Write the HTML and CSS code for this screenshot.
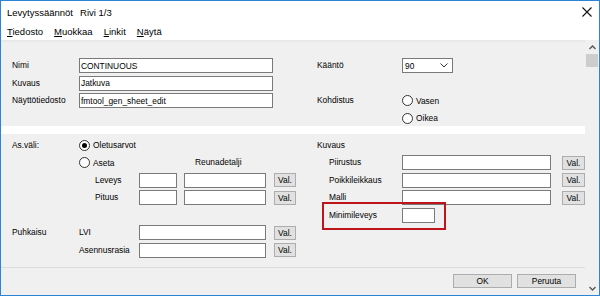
FILE: index.html
```html
<!DOCTYPE html>
<html lang="fi">
<head>
  <meta charset="UTF-8" />
  <meta name="viewport" content="width=device-width, initial-scale=1.0"/>
  <title>Levytyssäännöt</title>
  <link rel="stylesheet" href="styles.css">
</head>
<body>
  <div class="window">
    <div class="titlebar">
      <span>Levytyssäännöt</span>
      <span class="rivi">Rivi 1/3</span>
      <svg class="close" width="10" height="10" viewBox="0 0 10 10">
        <path d="M0.5 0.5L9.5 9.5M9.5 0.5L0.5 9.5" stroke="#111" stroke-width="1.1" fill="none"/>
      </svg>
    </div>
    <div class="menubar">
      <span><u>T</u>iedosto</span>
      <span><u>M</u>uokkaa</span>
      <span><u>L</u>inkit</span>
      <span><u>N</u>äytä</span>
    </div>

    <div class="client">
      <div class="panels">
        <div class="panel panel-top">
          <span class="lbl col1">Nimi</span>
          <input class="field col2" type="text" value="CONTINUOUS">
          <span class="lbl col4">Kääntö</span>
          <div class="select">
            <span>90</span>
            <svg width="8" height="5" viewBox="0 0 8 5"><path d="M0.5 0.5L4 4L7.5 0.5" stroke="#333" stroke-width="1" fill="none"/></svg>
          </div>

          <span class="lbl col1">Kuvaus</span>
          <input class="field col2" type="text" value="Jatkuva">

          <span class="lbl col1">Näyttötiedosto</span>
          <input class="field col2" type="text" value="fmtool_gen_sheet_edit">
          <span class="lbl col4">Kohdistus</span>
          <span class="opt col5"><span class="radio"></span>Vasen</span>
          <span class="opt col5"><span class="radio"></span>Oikea</span>
        </div>

        <div class="band"></div>

        <div class="panel panel-bottom">
          <div class="form">
            <span class="lbl c-main">As.väli:</span>
            <span class="opt c-opt"><span class="radio on"></span>Oletusarvot</span>
            <span class="lbl c-grp">Kuvaus</span>

            <span class="opt c-opt2"><span class="radio"></span>Aseta</span>
            <span class="lbl c-reuna">Reunadetalji</span>
            <span class="lbl c-rlbl">Piirustus</span>
            <input class="field c-rin" type="text">
            <span class="val c-rval">Val.</span>

            <span class="lbl c-sub">Leveys</span>
            <input class="field c-short" type="text">
            <input class="field c-wide" type="text">
            <span class="val c-lval">Val.</span>
            <span class="lbl c-rlbl">Poikkileikkaus</span>
            <input class="field c-rin" type="text">
            <span class="val c-rval">Val.</span>

            <span class="lbl c-sub">Pituus</span>
            <input class="field c-short" type="text">
            <input class="field c-wide" type="text">
            <span class="val c-lval">Val.</span>
            <span class="lbl c-rlbl">Malli</span>
            <input class="field c-rin" type="text">
            <span class="val c-rval">Val.</span>

            <span class="lbl c-rlbl marked">Minimileveys<span class="mark"></span></span>
            <input class="field c-rin small" type="text">

            <span class="lbl c-main">Puhkaisu</span>
            <span class="lbl c-mid">LVI</span>
            <input class="field c-long" type="text">
            <span class="val c-lval">Val.</span>

            <span class="lbl c-mid">Asennusrasia</span>
            <input class="field c-long" type="text">
            <span class="val c-lval">Val.</span>
          </div>

          <div class="rule"></div>

          <div class="actions">
            <span class="btn">OK</span>
            <span class="btn">Peruuta</span>
          </div>
        </div>
      </div>

      <div class="scrollbar">
        <div class="arrow">
          <svg width="7" height="5" viewBox="0 0 7 5"><path d="M0.5 4L3.5 1L6.5 4" stroke="#555" stroke-width="1.3" fill="none"/></svg>
        </div>
        <div class="thumb"></div>
        <div class="track"></div>
        <div class="arrow">
          <svg width="7" height="5" viewBox="0 0 7 5"><path d="M0.5 1L3.5 4L6.5 1" stroke="#555" stroke-width="1.3" fill="none"/></svg>
        </div>
      </div>
    </div>
  </div>
</body>
</html>
```

FILE: styles.css
```css
* {
  box-sizing: border-box;
}
body {
  margin: 0;
  font-family: 'Liberation Sans', Arial, sans-serif;
  color: #000;
  background: #fff;
}
.window {
  width: 600px;
  height: 296px;
  border: 1px solid #2b84d6;
  background: #fff;
  display: flex;
  flex-direction: column;
  overflow: hidden;
}
.titlebar {
  height: 22px;
  display: flex;
  align-items: center;
  padding-left: 6px;
  font-size: 9.5px;
}
.rivi {
  margin-left: 7px;
}
.close {
  margin-left: auto;
  margin-right: 7px;
}
.menubar {
  height: 17px;
  display: flex;
  align-items: center;
  gap: 11px;
  padding-left: 6px;
  font-size: 9.5px;
}
.client {
  flex: 1;
  display: flex;
  min-height: 0;
}
.panels {
  flex: 1;
  display: flex;
  flex-direction: column;
}
.panel {
  background: #f0f0f0;
  font-size: 8.4px;
}
.band {
  height: 8px;
  background: #fff;
}

/* form bits */
.lbl {
  line-height: 15px;
  white-space: nowrap;
}
.field {
  height: 15px;
  border: 1px solid #7a7a7a;
  background: #fff;
  font: inherit;
  padding: 0 1px;
  margin: 0;
  outline: none;
  color: #000;
}
.opt {
  display: flex;
  align-items: center;
  gap: 3px;
  white-space: nowrap;
}
.radio {
  width: 11px;
  height: 11px;
  border: 1px solid #333;
  border-radius: 50%;
  background: #fff;
  display: flex;
  align-items: center;
  justify-content: center;
}
.radio.on::after {
  content: "";
  width: 5px;
  height: 5px;
  border-radius: 50%;
  background: #000;
}
.val, .btn {
  border: 1px solid #adadad;
  background: #e1e1e1;
  text-align: center;
  height: 14px;
  line-height: 12px;
  align-self: center;
}

/* top panel */
.panel-top {
  height: 86px;
  border-top: 2px solid #e8e8e8;
  padding: 16px 0 0 11px;
  display: grid;
  grid-template-columns: 67px 194px 44px 85px 51px;
  grid-auto-rows: 15px;
  row-gap: 2.5px;
  align-content: start;
}
.col1 {
  grid-column: 1;
}
.col2 {
  grid-column: 2;
}
.col4 {
  grid-column: 4;
}
.col5 {
  grid-column: 5;
}
.select {
  grid-column: 5;
  height: 15px;
  border: 1px solid #7a7a7a;
  background: #fff;
  display: flex;
  align-items: center;
  padding-left: 2px;
}
.select svg {
  margin-left: auto;
  margin-right: 4px;
}

/* bottom panel */
.panel-bottom {
  flex: 1;
  display: flex;
  flex-direction: column;
}
.form {
  display: grid;
  padding: 3.5px 0 0 11px;
  grid-template-columns: 67px 16px 44px 38px 7px 82px 8px 22px 21px 12px 73px 149px 11px 23px;
  grid-auto-rows: 15px;
  row-gap: 2.5px;
}
.c-main { grid-column: 1; }
.c-opt { grid-column: 2 / 9; }
.c-opt2 { grid-column: 2 / 6; }
.c-reuna { grid-column: 6 / 8; padding-left: 11px; }
.c-sub { grid-column: 3; }
.c-mid { grid-column: 2 / 4; }
.c-short { grid-column: 4; }
.c-wide { grid-column: 6; }
.c-long { grid-column: 4 / 7; }
.c-lval { grid-column: 8; }
.c-grp { grid-column: 10 / 12; }
.c-rlbl { grid-column: 11; }
.c-rin { grid-column: 12; }
.c-rval { grid-column: 14; }
.small {
  width: 33px;
}
.marked {
  position: relative;
}
.mark {
  position: absolute;
  left: -7px;
  top: -5.5px;
  width: 124px;
  height: 28px;
  border: 2px solid #c0141c;
  pointer-events: none;
}
.rule {
  margin-top: 9.5px;
  border-top: 1px solid #dcdcdc;
}
.actions {
  display: flex;
  justify-content: flex-end;
  gap: 5px;
  padding: 6px 9px 0 0;
}
.btn {
  width: 59px;
}

/* scrollbar */
.scrollbar {
  width: 14px;
  background: #f0f0f0;
  display: flex;
  flex-direction: column;
}
.arrow {
  height: 14px;
  display: flex;
  align-items: center;
  justify-content: center;
}
.thumb {
  height: 13px;
  margin: 0 1px;
  background: #cdcdcd;
}
.track {
  flex: 1;
}
```
